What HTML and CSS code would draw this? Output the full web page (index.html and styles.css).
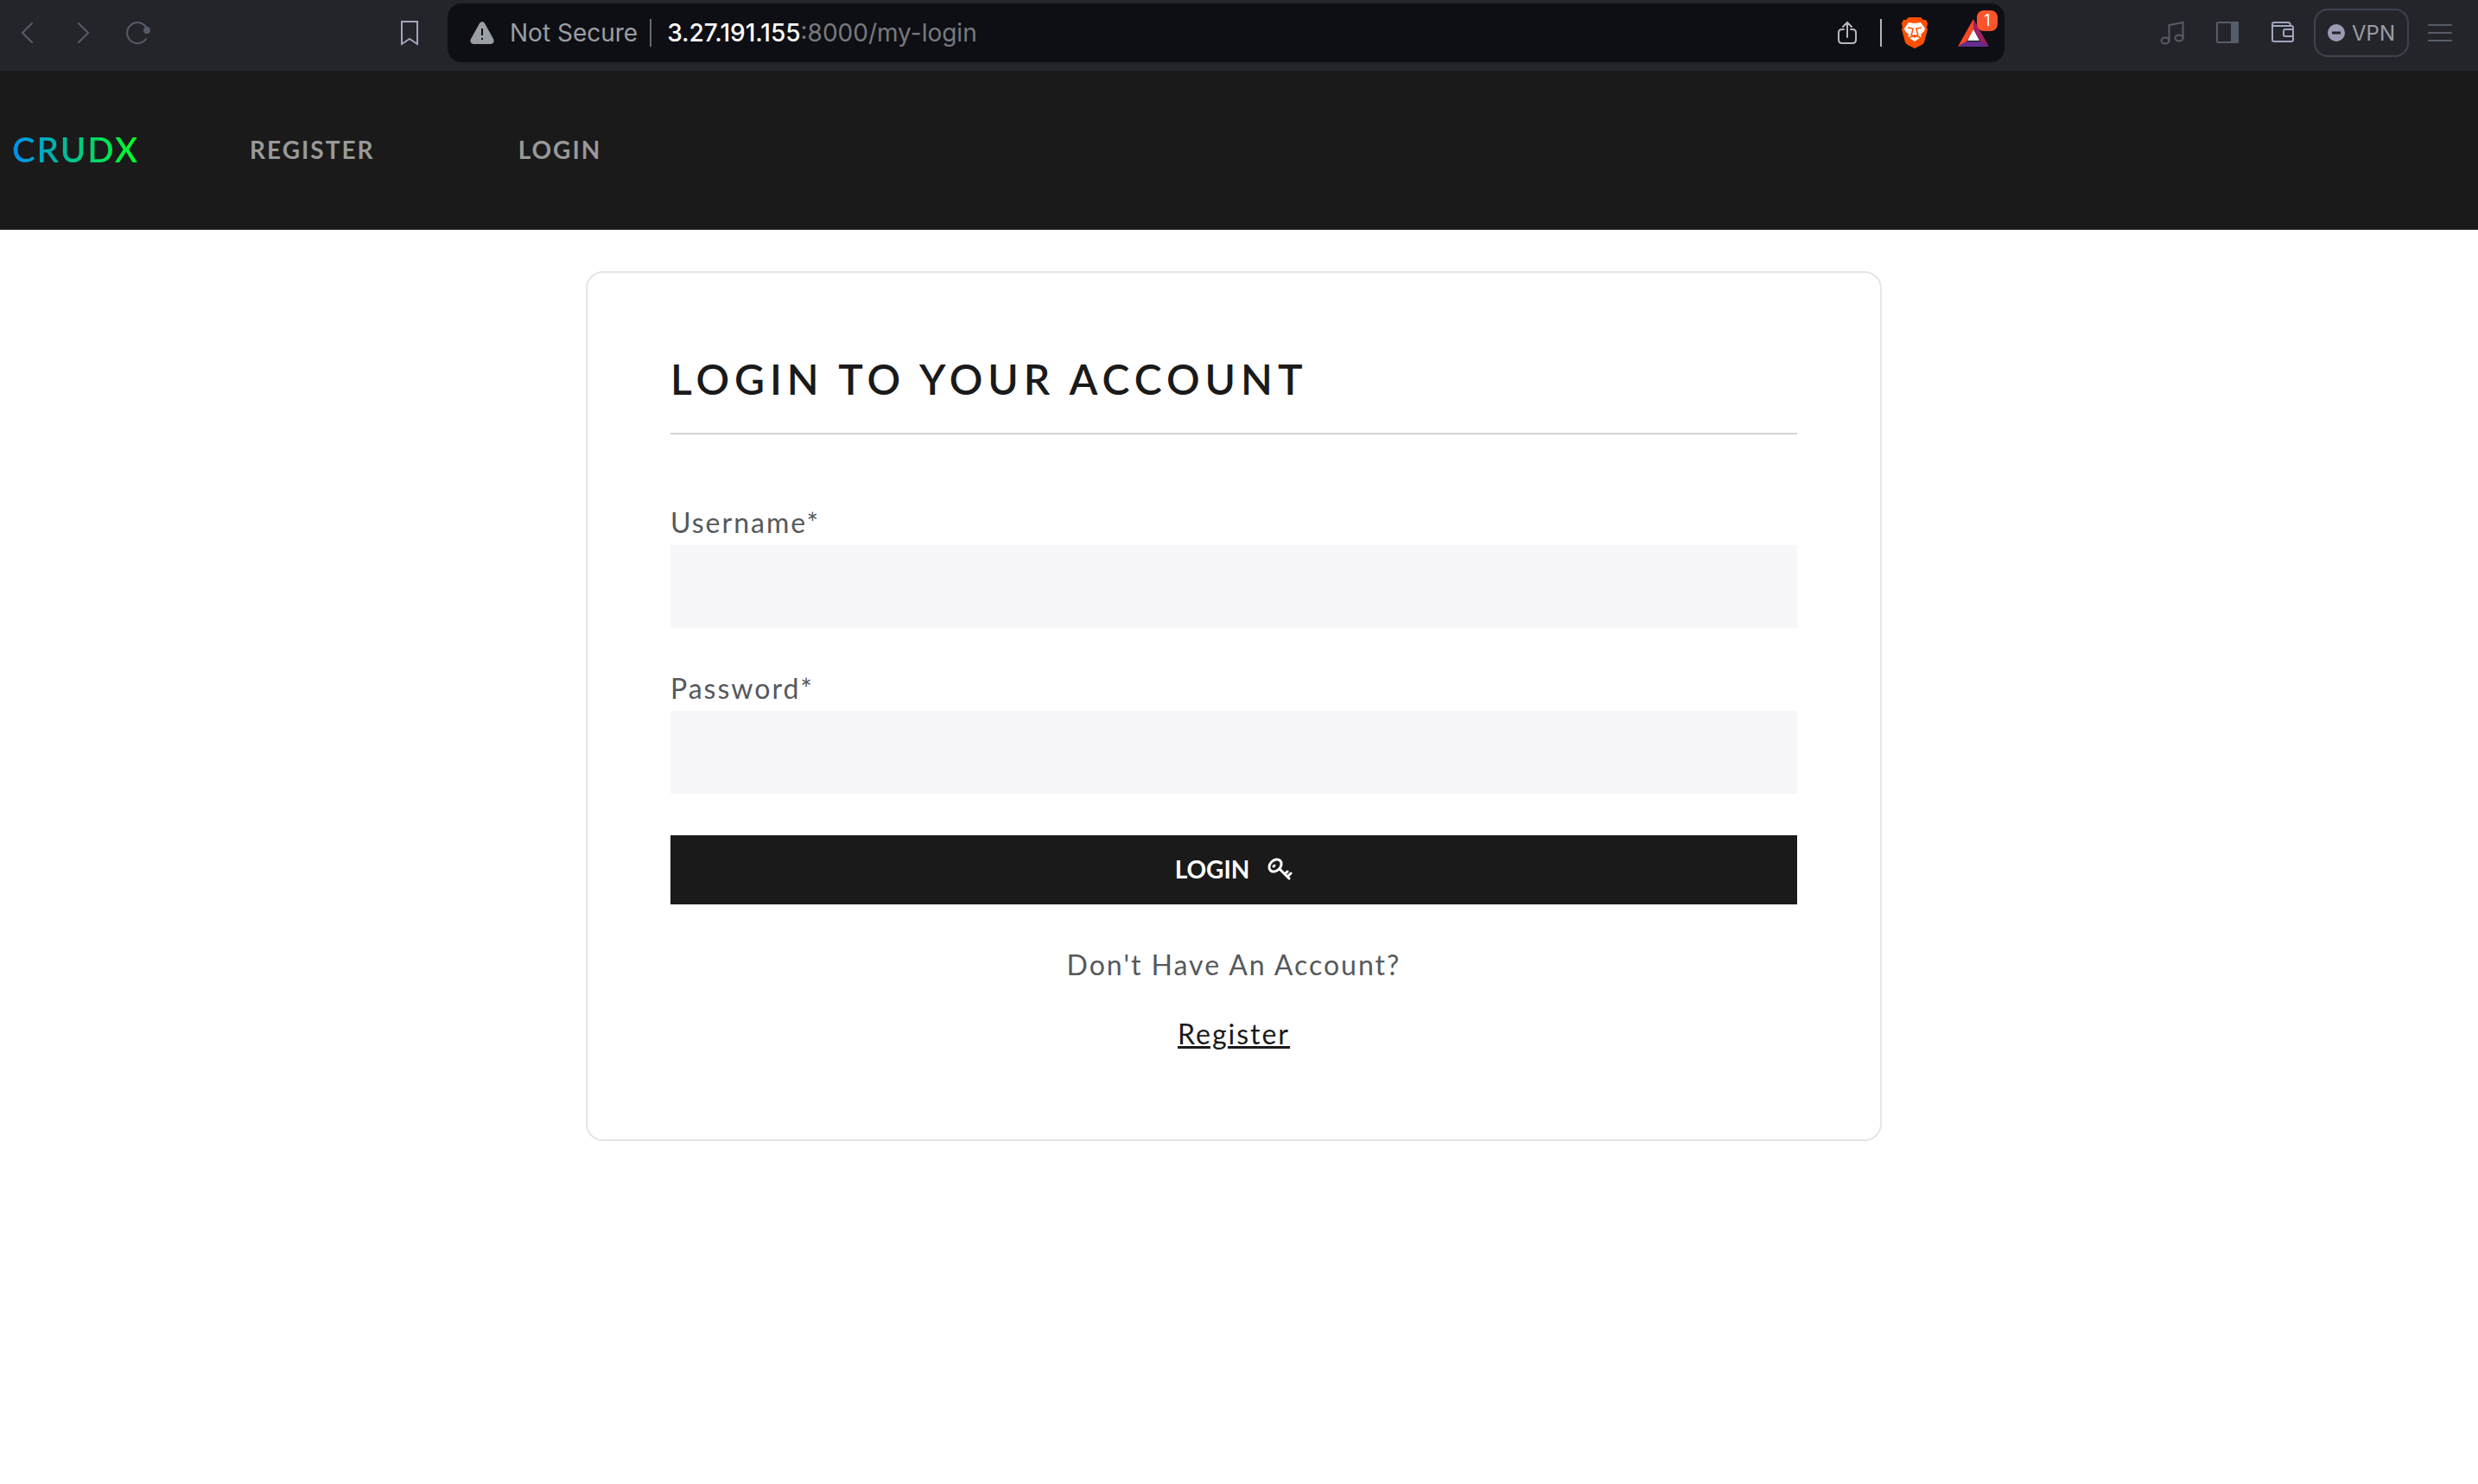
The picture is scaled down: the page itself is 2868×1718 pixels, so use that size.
FILE: index.html
```html
<!DOCTYPE html>
<html lang="en">
<head>
<meta charset="utf-8">
<title>CRUDX | Login</title>
<link rel="stylesheet" href="styles.css">
</head>
<body>
<header class="toolbar">
  <div class="toolbar-left">
    <button class="tool" aria-label="Back"><svg width="28" height="28" viewBox="0 0 28 28"><path d="M19 3L8 14l11 11"/></svg></button>
    <button class="tool" aria-label="Forward"><svg width="28" height="28" viewBox="0 0 28 28"><path d="M9 3l11 11L9 25"/></svg></button>
    <button class="tool" aria-label="Reload"><svg width="28" height="28" viewBox="0 0 28 28"><path d="M23 21A12 12 0 1 1 24 9"/><circle class="dot" cx="24" cy="11" r="3"/></svg></button>
    <button class="tool tool-light tool-end" aria-label="Bookmark"><svg width="28" height="32" viewBox="0 0 28 32"><path d="M5 3h18v26l-9-6-9 6z"/></svg></button>
  </div>
  <div class="omnibox">
    <svg class="warning" width="28" height="28" viewBox="0 0 28 28"><path class="warn-body" d="M11 3q3-4 6 0l10 18q2 5-3 6H4q-5-1-3-6z"/><path class="warn-mark" d="M14 9v8M14 20v2"/></svg>
    <span class="secure">Not Secure</span>
    <span class="divider divider-dim"></span>
    <span class="url"><b>3.27.191.155</b>:8000/my-login</span>
    <button class="mini share" aria-label="Share"><svg width="24" height="30" viewBox="0 0 24 30"><path d="M8 11H6q-4 0-4 4v8q0 4 4 4h12q4 0 4-4v-8q0-4-4-4h-2M12 20V3M7 8l5-5 5 5"/></svg></button>
    <span class="divider"></span>
    <button class="mini" aria-label="Brave Shields"><svg width="32" height="36" viewBox="0 0 32 36"><path fill="#ff5000" d="M9 0h14l3 3h3l2 4-1 5 1 2-4 15q-1 2-3 3l-8 4-8-4q-2-1-3-3L1 14l1-2-1-5 2-4h3z"/><path fill="#fff" d="M9 6l7 1 7-1 5 7-1 3-4 4 1 3-8-3-8 3 1-3-4-4-1-3zM16 22l6 2-6 4-6-4z"/><path fill="none" stroke="#ff5000" stroke-width="1.5" d="M8 12l6 1-1 5-1 2 4 3 4-3-1-2-1-5 6-1"/></svg></button>
    <button class="mini rewards" aria-label="Rewards"><svg width="36" height="32" viewBox="0 0 36 32"><path fill="#ff4724" d="M18 0v12L10 26 0 32z"/><path fill="#9e1f63" d="M18 0v12l8 14 10 6z"/><path fill="#662d91" d="M0 32l10-6h16l10 6z"/><path fill="#fff" d="M18 12l7 13H11z"/></svg><span class="badge">1</span></button>
  </div>
  <div class="toolbar-right">
    <button class="tool" aria-label="Media"><svg width="28" height="28" viewBox="0 0 28 28"><ellipse cx="6" cy="23" rx="4.5" ry="3.5"/><ellipse cx="22" cy="20" rx="4.5" ry="3.5"/><path d="M10.5 23V5l16-3v18"/></svg></button>
    <button class="tool" aria-label="Sidebar"><svg width="28" height="28" viewBox="0 0 28 28"><rect x="2" y="2" width="24" height="23" rx="1"/><path class="dot" d="M19 2h7v23h-7z"/></svg></button>
    <button class="tool tool-light" aria-label="Wallet"><svg width="28" height="28" viewBox="0 0 28 28"><path d="M2 4v18q0 2 2 2h20q2 0 2-2V8q0-2-2-2H4q-2 0-2-2 0-2 2-2h16q3 0 3 4M26 10h-9q-2 0-2 2v4q0 2 2 2h9"/></svg></button>
    <button class="vpn"><svg width="20" height="20" viewBox="0 0 20 20"><circle cx="10" cy="10" r="10" fill="#9a9cb3"/><path d="M5 10h10" stroke="#24252b" stroke-width="3"/></svg>VPN</button>
    <button class="tool" aria-label="Menu"><svg width="28" height="28" viewBox="0 0 28 28"><path d="M1 5h26M1 14h26M1 23h26"/></svg></button>
  </div>
</header>
<nav class="navbar">
  <a class="brand" href="#">CRUDX</a>
  <a class="nav-link" href="#">REGISTER</a>
  <a class="nav-link" href="#">LOGIN</a>
</nav>
<main class="page">
  <form class="card">
    <h1 class="title">LOGIN TO YOUR ACCOUNT</h1>
    <div class="field"><label for="username">Username*</label><input id="username" type="text"></div>
    <div class="field"><label for="password">Password*</label><input id="password" type="password"></div>
    <button class="submit" type="button">LOGIN <svg width="30" height="28" viewBox="0 0 30 28"><ellipse cx="10" cy="10" rx="8" ry="6" transform="rotate(-45 10 10)"/><path d="M8 11l1-1M15 14l11 11M21 20l3-3M24 23l4-4"/></svg></button>
    <p class="prompt">Don't Have An Account?</p>
    <p class="prompt"><a href="#">Register</a></p>
  </form>
</main>
</body>
</html>
```
FILE: styles.css
```css
* { box-sizing: border-box; }
body { margin: 0; background: #fff; font-family: Lato, "Open Sans", sans-serif; }
button { margin: 0; padding: 0; border: 0; background: none; font: inherit; color: inherit; }
svg { display: block; flex: none; }

.toolbar { display: grid; grid-template-columns: 518px 1fr 548px; height: 82px; padding-bottom: 6px; align-items: center; background: #24252b; font-family: Inter, sans-serif; }
.toolbar-left, .toolbar-right { display: flex; align-items: center; }
.toolbar-left { padding-right: 12px; }
.toolbar-right { justify-content: flex-end; padding-right: 12px; }
.tool { display: flex; width: 64px; height: 64px; align-items: center; justify-content: center; color: #565d69; }
.tool svg { fill: none; stroke: currentColor; stroke-width: 2; stroke-linecap: round; }
.tool .dot { fill: currentColor; }
.tool-light { color: #a1a6bd; }
.tool-end { margin-left: auto; }
.omnibox { display: flex; height: 68px; padding: 0 18px 0 26px; align-items: center; border-radius: 16px; background: #0e0f14; font-size: 28px; color: #777a7e; }
.warn-body { fill: #9a9ea5; }
.warn-mark { stroke: #0e0f14; stroke-width: 2; }
.secure { margin: 0 14px 0 18px; color: #9a9ea2; }
.divider { width: 2px; height: 32px; background: #b4b4b6; }
.divider-dim { background: #666a6e; }
.url { margin-left: 18px; }
.url b { font-weight: 500; color: #fff; }
.share { margin: 0 26px 0 auto; }
.share svg { fill: none; stroke: #b8b8ba; stroke-width: 2; stroke-linecap: round; }
.mini + .mini { margin-left: 34px; }
.divider + .mini { margin-left: 22px; }
.rewards { position: relative; }
.badge { position: absolute; top: -10px; right: -10px; width: 24px; height: 24px; border-radius: 8px; background: #fb542b; color: #fff; font-size: 18px; line-height: 24px; text-align: center; }
.vpn { display: flex; width: 110px; height: 56px; margin: 0 4px; gap: 8px; align-items: center; justify-content: center; border: 2px solid #3d444f; border-radius: 16px; font-size: 24px; color: #9a9ea2; }

.navbar { display: flex; height: 184px; align-items: center; padding: 0 0 2px 14px; background: #1a1a1a; }
.navbar a { text-decoration: none; }
.brand { margin-right: 128px; background: linear-gradient(90deg, #008ff0, #00ff20); background-clip: text; color: transparent; font-size: 40px; font-weight: 600; letter-spacing: 2px; }
.nav-link { margin-right: 166px; color: #999; font-size: 28px; font-weight: 700; letter-spacing: 2px; }

.page { padding: 48px 12px 48px 0; }
.card { max-width: 1500px; margin: 0 auto; padding: 96px; border: 2px solid #e5e5e5; border-radius: 20px; color: #55595c; font-size: 32px; font-weight: 400; line-height: 44px; letter-spacing: 2px; }
.title { margin: 0 0 80px; padding-bottom: 35px; border-bottom: 2px solid #d4d4d4; color: #1a1a1a; font-size: 48px; font-weight: 600; line-height: 54px; letter-spacing: 6px; }
.field { margin-bottom: 48px; }
.field label { display: block; margin-bottom: 4px; }
.field input { display: block; width: 100%; height: 96px; padding: 0 32px; border: 0; background: #f7f7f9; font: inherit; }
.submit { display: flex; width: 100%; height: 80px; margin-bottom: 48px; padding-bottom: 2px; gap: 20px; align-items: center; justify-content: center; background: #1a1a1a; color: #fff; font-size: 28px; font-weight: 700; }
.submit svg { fill: none; stroke: #fff; stroke-width: 3; stroke-linecap: round; }
.prompt { margin: 0 0 36px; text-align: center; }
.prompt:last-child { margin-bottom: 4px; }
.prompt a { color: #1a1a1a; }
```
